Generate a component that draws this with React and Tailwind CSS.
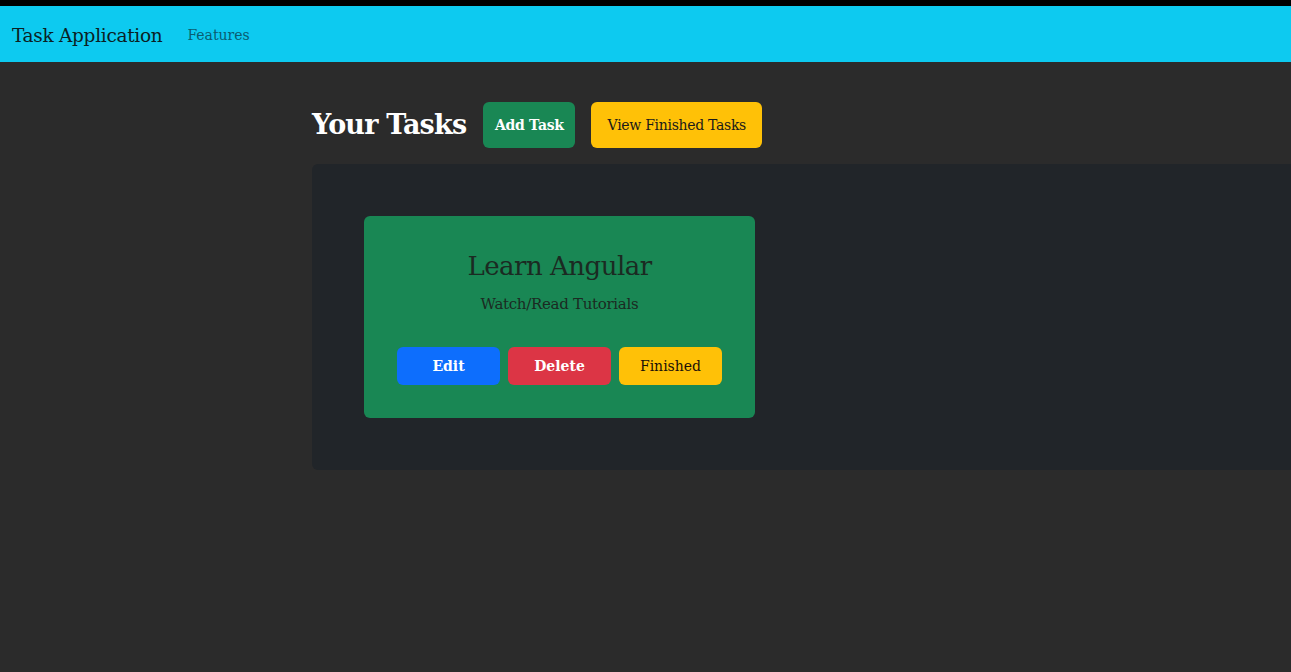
import React from "react";

const font = { fontFamily: '"DejaVu Serif", "Liberation Serif", serif' };

export default function App() {
  return (
    <div className="min-h-[672px] w-full bg-[#2b2b2b] overflow-hidden" style={font}>
      <div className="h-[6px] bg-black" />
      <nav className="h-[56px] bg-[#0dcaf0] flex items-center px-3 pt-[3px]">
        <span className="text-[18.5px] text-[#0b1f24] tracking-[-0.3px]">Task Application</span>
        <span className="ml-[25px] text-[14px] text-[#0a5d70]">Features</span>
      </nav>
      <main className="pl-[312px] pt-[40px]">
        <div className="flex items-center h-[46px]">
          <h1 className="text-[27px] font-bold text-white tracking-[-0.8px] mr-[17px]">Your Tasks</h1>
          <button className="h-[46px] w-[92px] rounded-md bg-[#198754] text-white text-[14px] font-bold tracking-[-0.3px]">Add Task</button>
          <button className="ml-[16px] h-[46px] w-[171px] rounded-md bg-[#ffc107] text-[#1a1a1a] text-[14px] tracking-[-0.3px]">View Finished Tasks</button>
        </div>
        <section className="mt-[16px] w-[1100px] bg-[#212529] rounded-md p-[52px]">
          <div className="w-[391px] h-[202px] bg-[#198754] rounded-md flex flex-col items-center pt-[33px]">
            <h2 className="text-[26px] text-[#1b2a22] leading-[34px] tracking-[-0.5px]">Learn Angular</h2>
            <p className="mt-[11px] text-[15px] leading-[20px] text-[#1b2a22] tracking-[-0.3px]">Watch/Read Tutorials</p>
            <div className="mt-[33px] flex gap-[8px]">
              <button className="w-[103px] h-[38px] rounded-md bg-[#0d6efd] text-white text-[14px] font-bold">Edit</button>
              <button className="w-[103px] h-[38px] rounded-md bg-[#dc3545] text-white text-[14px] font-bold">Delete</button>
              <button className="w-[103px] h-[38px] rounded-md bg-[#ffc107] text-[#1a1008] text-[14px]">Finished</button>
            </div>
          </div>
        </section>
      </main>
    </div>
  );
}
